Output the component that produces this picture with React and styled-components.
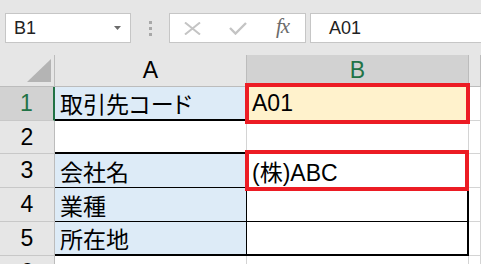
import React from "react";
import styled, { createGlobalStyle } from "styled-components";

const GlobalStyle = createGlobalStyle`
  html, body {
    margin: 0;
    padding: 0;
    background: #fff;
    overflow: hidden;
  }
  body {
    font-family: "Liberation Sans", "Noto Sans CJK JP", sans-serif;
  }
`;

const rows = [
  { num: "1", label: "取引先コード", value: "A01", active: true },
  { num: "2", label: "", value: "" },
  { num: "3", label: "会社名", value: "(株)ABC" },
  { num: "4", label: "業種", value: "" },
  { num: "5", label: "所在地", value: "" },
  { num: "6", label: "", value: "" },
];

const App = () => {
  return (
    <>
      <GlobalStyle />
      <Window>
        <Toolbar>
          <NameBox>
            <span>B1</span>
            <svg width="7" height="4" viewBox="0 0 7 4">
              <polygon points="0,0 7,0 3.5,4" fill="#6b6b6b" />
            </svg>
          </NameBox>
          <Grip>
            <Dot />
            <Dot />
            <Dot />
          </Grip>
          <FormulaButtons>
            <ToolButton>
              <svg width="17" height="13" viewBox="0 0 17 13">
                <path d="M1 0.5 L16 12.5 M16 0.5 L1 12.5" stroke="#c4c4c4" strokeWidth="2" fill="none" />
              </svg>
            </ToolButton>
            <ToolButton>
              <svg width="18" height="13" viewBox="0 0 18 13">
                <path d="M1 6 L6.5 11.5 L17 1" stroke="#c4c4c4" strokeWidth="2.4" fill="none" />
              </svg>
            </ToolButton>
            <ToolButton>
              <Fx>fx</Fx>
            </ToolButton>
          </FormulaButtons>
          <FormulaInput>A01</FormulaInput>
        </Toolbar>

        <Sheet>
          <Corner>
            <CornerMark />
          </Corner>
          <ColHeader>A</ColHeader>
          <ColHeader selected>B</ColHeader>
          <ColHeader />

          {rows.map((r, i) => {
            const n = i + 1;
            const boxed = n >= 3 && n <= 5;
            return (
              <React.Fragment key={r.num}>
                <RowHeader selected={r.active}>{r.num}</RowHeader>
                <Cell
                  tint={r.label ? "#ddebf7" : "#fff"}
                  bottom={n === 1 || n === 2 || n === 5 ? "2px solid #000" : boxed ? "1px solid #000" : undefined}
                  right={boxed ? "1px solid #000" : undefined}
                  tight={n === 1}
                >
                  {r.label}
                </Cell>
                <Cell
                  tint={r.active ? "#fff2cc" : "#fff"}
                  bottom={n === 5 ? "2px solid #000" : boxed ? "1px solid #000" : undefined}
                  right={boxed ? "2px solid #000" : undefined}
                >
                  {r.value}
                  {(n === 1 || n === 3) && <Highlight />}
                </Cell>
                <Cell />
              </React.Fragment>
            );
          })}
        </Sheet>
      </Window>
    </>
  );
};

const Window = styled.div`
  width: 481px;
  height: 264px;
  overflow: hidden;
  background: #e6e6e6;
`;

const Toolbar = styled.div`
  display: flex;
  align-items: flex-start;
  height: 55px;
  padding: 13px 0 0 5px;
  box-sizing: border-box;
  background: #e6e6e6;
`;

const NameBox = styled.div`
  display: flex;
  align-items: center;
  justify-content: space-between;
  width: 126px;
  height: 30px;
  box-sizing: border-box;
  padding: 0 9px 0 8px;
  background: #fff;
  border: 1px solid #c6c6c6;
  font-size: 18px;
  color: #222;
`;

const Grip = styled.div`
  display: flex;
  flex-direction: column;
  gap: 3px;
  margin: 8px 17px 0 18px;
`;

const Dot = styled.span`
  width: 3px;
  height: 3px;
  background: #a8a8a8;
`;

const FormulaButtons = styled.div`
  display: flex;
  height: 30px;
  box-sizing: border-box;
  background: #fff;
  border: 1px solid #c6c6c6;
`;

const ToolButton = styled.div`
  display: flex;
  align-items: center;
  justify-content: center;
  width: 45px;
  height: 100%;
`;

const Fx = styled.span`
  font-family: "Liberation Serif", serif;
  font-style: italic;
  font-size: 21px;
  color: #6b6b6b;
  letter-spacing: -1px;
  margin-top: -3px;
`;

const FormulaInput = styled.div`
  flex: 1;
  display: flex;
  align-items: center;
  height: 30px;
  box-sizing: border-box;
  margin-left: 4px;
  margin-right: -2px;
  padding-left: 18px;
  background: #fff;
  border: 1px solid #c6c6c6;
  font-size: 18px;
  color: #222;
`;

const Sheet = styled.div`
  display: grid;
  grid-template-columns: 55px 192px 222px 1fr;
  grid-template-rows: 32px 34px 33px 34px 34px 34px 34px;
  background: #fff;
  font-size: 23px;
`;

const Corner = styled.div`
  display: flex;
  align-items: flex-end;
  justify-content: flex-end;
  padding: 0 3px 4px 0;
  background: #e6e6e6;
  border-right: 1px solid #bcbcbc;
  border-bottom: 1px solid #bcbcbc;
`;

const CornerMark = styled.span`
  width: 24px;
  height: 23px;
  background: #b4b4b4;
  clip-path: polygon(100% 0, 100% 100%, 0 100%);
`;

const ColHeader = styled.div`
  display: flex;
  align-items: center;
  justify-content: center;
  background: ${({ selected }) => (selected ? "#d2d2d2" : "#e6e6e6")};
  color: ${({ selected }) => (selected ? "#217346" : "#000")};
  border-right: 1px solid #bcbcbc;
  border-bottom: ${({ selected }) => (selected ? "2px solid #217346" : "1px solid #bcbcbc")};
`;

const RowHeader = styled.div`
  display: flex;
  align-items: center;
  justify-content: center;
  background: ${({ selected }) => (selected ? "#d2d2d2" : "#e6e6e6")};
  color: ${({ selected }) => (selected ? "#217346" : "#000")};
  border-right: ${({ selected }) => (selected ? "2px solid #217346" : "1px solid #bcbcbc")};
  border-bottom: 1px solid #c8c8c8;
`;

const Cell = styled.div`
  position: relative;
  display: flex;
  align-items: center;
  padding-left: 5px;
  white-space: nowrap;
  font-feature-settings: ${({ tight }) => (tight ? '"palt"' : "normal")};
  background: ${({ tint }) => tint || "#fff"};
  border-right: ${({ right }) => right || "1px solid #d4d4d4"};
  border-bottom: ${({ bottom }) => bottom || "1px solid #d4d4d4"};
`;

const Highlight = styled.span`
  position: absolute;
  top: -4px;
  bottom: -4px;
  left: -2px;
  right: -2px;
  border: 4px solid #ec1c24;
  z-index: 2;
  pointer-events: none;
`;

export default App;
